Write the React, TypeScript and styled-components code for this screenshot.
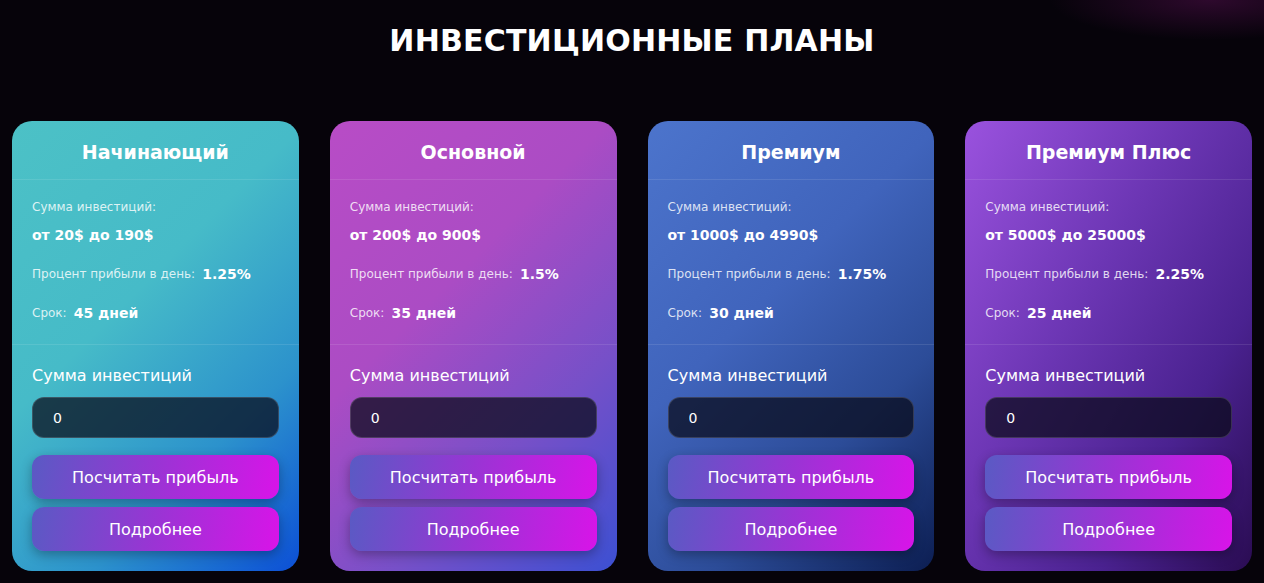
import styled, { createGlobalStyle } from "styled-components";

const GlobalStyle = createGlobalStyle`
    * {
        box-sizing: border-box;
    }

    body {
        margin: 0;
        background: #06030a;
        font-family: "DejaVu Sans", "Noto Sans", sans-serif;
        color: #fff;
    }
`;

const Page = styled.section`
    min-height: 583px;
    padding: 22px 0 12px;
    background:
        radial-gradient(ellipse 160px 40px at 1210px 0px, rgba(120, 20, 110, 0.35), transparent 100%),
        #06030a;
`;

const Heading = styled.h2`
    margin: 0;
    text-align: center;
    font-size: 30px;
    font-weight: 600;
    letter-spacing: 0.2px;
    line-height: 38px;
`;

const Grid = styled.div`
    display: grid;
    grid-template-columns: repeat(4, 1fr);
    gap: 31px;
    width: 1240px;
    margin: 61px auto 0;
`;

const Card = styled.article<{ $bg: string }>`
    display: flex;
    flex-direction: column;
    border-radius: 20px;
    overflow: hidden;
    background: ${({ $bg }) => $bg};
`;

const CardHeader = styled.header`
    padding: 19px 10px 15px;
    text-align: center;
    border-bottom: 1px solid rgba(255, 255, 255, 0.1);
`;

const CardTitle = styled.h3`
    margin: 0;
    font-size: 19px;
    font-weight: 700;
    line-height: 24px;
`;

const Info = styled.div`
    padding: 19px 20px 21px;
    border-bottom: 1px solid rgba(255, 255, 255, 0.1);
`;

const Caption = styled.span`
    display: block;
    font-size: 12px;
    color: rgba(255, 255, 255, 0.82);
    line-height: 16px;
`;

const Amount = styled.div`
    margin-top: 10px;
    font-size: 14px;
    font-weight: 700;
    line-height: 20px;
`;

const InfoRow = styled.div`
    display: flex;
    align-items: center;
    gap: 7px;
    margin-top: 19px;
    height: 20px;
`;

const Value = styled.span`
    font-size: 14px;
    font-weight: 700;
    line-height: 20px;
`;

const Calc = styled.div`
    display: flex;
    flex-direction: column;
    padding: 20px 20px 20px;
`;

const Label = styled.label`
    font-size: 16px;
    font-weight: 500;
    line-height: 22px;
`;

const Input = styled.input`
    margin-top: 10px;
    height: 41px;
    width: 100%;
    padding: 0 20px;
    border-radius: 12px;
    border: 1px solid rgba(255, 255, 255, 0.15);
    background: rgba(8, 10, 24, 0.72);
    color: #fff;
    font: 500 14px "DejaVu Sans", sans-serif;
    outline: none;
`;

const Button = styled.button<{ $first?: boolean }>`
    margin-top: ${({ $first }) => ($first ? "17px" : "8px")};
    height: 44px;
    width: 100%;
    border: none;
    border-radius: 12px;
    background: linear-gradient(100deg, #5a5ac4 0%, #9a34d4 50%, #d814e8 100%);
    box-shadow: 0 4px 12px rgba(0, 0, 0, 0.3);
    color: #fff;
    font: 500 16px "DejaVu Sans", sans-serif;
    cursor: pointer;
`;

const plans = [
    {
        title: "Начинающий",
        amount: "от 20$ до 190$",
        percent: "1.25%",
        term: "45 дней",
        bg: "linear-gradient(135deg, #4cc1c6 0%, #46bbc8 40%, #2c92cc 72%, #0c4fd6 100%)",
    },
    {
        title: "Основной",
        amount: "от 200$ до 900$",
        percent: "1.5%",
        term: "35 дней",
        bg: "linear-gradient(135deg, #b84cc6 0%, #ab4cc4 38%, #7650c8 70%, #3c50d2 100%)",
    },
    {
        title: "Премиум",
        amount: "от 1000$ до 4990$",
        percent: "1.75%",
        term: "30 дней",
        bg: "linear-gradient(135deg, #4c74cc 0%, #4064bc 40%, #2c4c98 70%, #0c1e52 100%)",
    },
    {
        title: "Премиум Плюс",
        amount: "от 5000$ до 25000$",
        percent: "2.25%",
        term: "25 дней",
        bg: "linear-gradient(120deg, #9a52de 0%, #6c36b4 40%, #4a2290 72%, #2a0c52 100%)",
    },
];

export default function App() {
    return (
        <>
            <GlobalStyle />
            <Page>
                <Heading>ИНВЕСТИЦИОННЫЕ ПЛАНЫ</Heading>
                <Grid>
                    {plans.map((p) => (
                        <Card key={p.title} $bg={p.bg}>
                            <CardHeader>
                                <CardTitle>{p.title}</CardTitle>
                            </CardHeader>
                            <Info>
                                <Caption>Сумма инвестиций:</Caption>
                                <Amount>{p.amount}</Amount>
                                <InfoRow>
                                    <Caption>Процент прибыли в день:</Caption>
                                    <Value>{p.percent}</Value>
                                </InfoRow>
                                <InfoRow>
                                    <Caption>Срок:</Caption>
                                    <Value>{p.term}</Value>
                                </InfoRow>
                            </Info>
                            <Calc>
                                <Label>Сумма инвестиций</Label>
                                <Input defaultValue="0" />
                                <Button $first>Посчитать прибыль</Button>
                                <Button>Подробнее</Button>
                            </Calc>
                        </Card>
                    ))}
                </Grid>
            </Page>
        </>
    );
}
